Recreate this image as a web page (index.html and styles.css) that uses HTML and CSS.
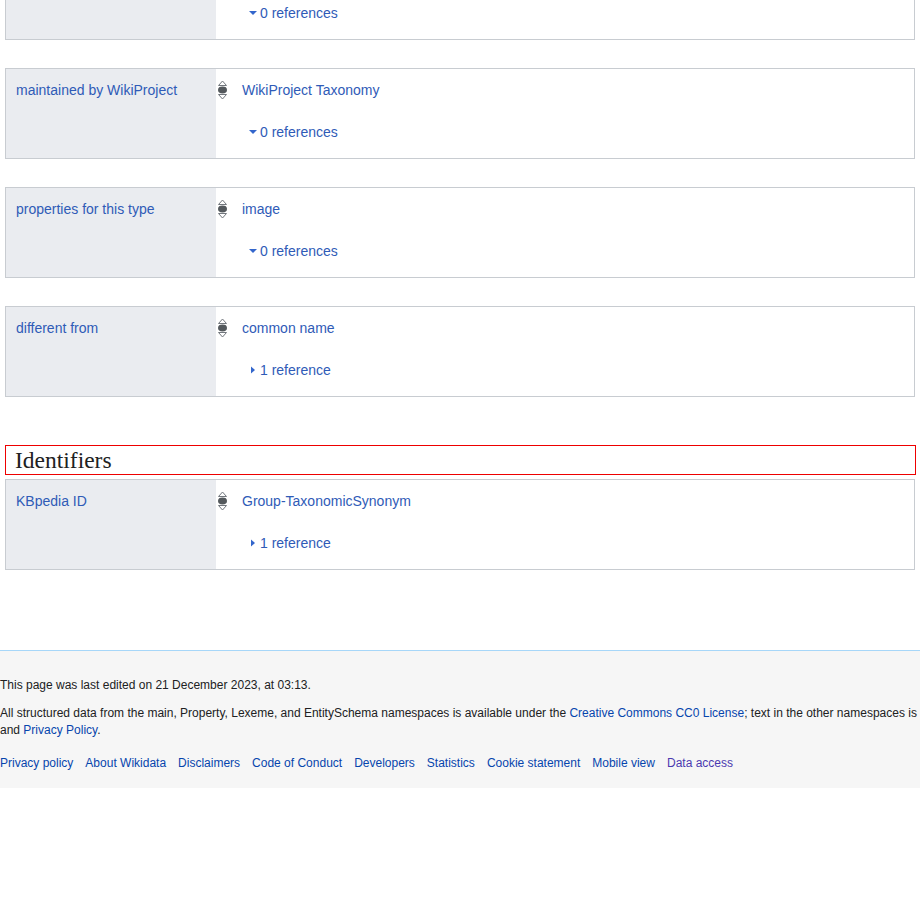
FILE: index.html
```html
<!DOCTYPE html>
<html lang="en">
<head>
<meta charset="utf-8">
<title>Wikidata</title>
<link rel="stylesheet" href="styles.css">
</head>
<body>
<main class="content">
  <section class="group">
    <div class="stmt">
      <div class="label"><a href="#">subclass of</a></div>
      <div class="values">
        <div class="value-row">
          <svg class="rank" width="11" height="20" viewBox="0 0 11 20"><path d="M5.5 1 L9.5 5.5 H1.5 Z" fill="none" stroke="#72777d" stroke-width="1"/><ellipse cx="5.5" cy="10" rx="4.5" ry="3.4" fill="#54595d"/><path d="M5.5 19 L9.5 14.5 H1.5 Z" fill="none" stroke="#72777d" stroke-width="1"/></svg>
          <a href="#" class="value">taxon</a>
        </div>
        <div class="refs"><svg class="tri" width="10" height="10" viewBox="0 0 10 10"><path d="M1 3 H9 L5 7 Z" fill="#36c"/></svg><a href="#">0 references</a></div>
      </div>
    </div>

    <div class="stmt">
      <div class="label"><a href="#">maintained by WikiProject</a></div>
      <div class="values">
        <div class="value-row">
          <svg class="rank" width="11" height="20" viewBox="0 0 11 20"><path d="M5.5 1 L9.5 5.5 H1.5 Z" fill="none" stroke="#72777d" stroke-width="1"/><ellipse cx="5.5" cy="10" rx="4.5" ry="3.4" fill="#54595d"/><path d="M5.5 19 L9.5 14.5 H1.5 Z" fill="none" stroke="#72777d" stroke-width="1"/></svg>
          <a href="#" class="value">WikiProject Taxonomy</a>
        </div>
        <div class="refs"><svg class="tri" width="10" height="10" viewBox="0 0 10 10"><path d="M1 3 H9 L5 7 Z" fill="#36c"/></svg><a href="#">0 references</a></div>
      </div>
    </div>

    <div class="stmt">
      <div class="label"><a href="#">properties for this type</a></div>
      <div class="values">
        <div class="value-row">
          <svg class="rank" width="11" height="20" viewBox="0 0 11 20"><path d="M5.5 1 L9.5 5.5 H1.5 Z" fill="none" stroke="#72777d" stroke-width="1"/><ellipse cx="5.5" cy="10" rx="4.5" ry="3.4" fill="#54595d"/><path d="M5.5 19 L9.5 14.5 H1.5 Z" fill="none" stroke="#72777d" stroke-width="1"/></svg>
          <a href="#" class="value">image</a>
        </div>
        <div class="refs"><svg class="tri" width="10" height="10" viewBox="0 0 10 10"><path d="M1 3 H9 L5 7 Z" fill="#36c"/></svg><a href="#">0 references</a></div>
      </div>
    </div>

    <div class="stmt">
      <div class="label"><a href="#">different from</a></div>
      <div class="values">
        <div class="value-row">
          <svg class="rank" width="11" height="20" viewBox="0 0 11 20"><path d="M5.5 1 L9.5 5.5 H1.5 Z" fill="none" stroke="#72777d" stroke-width="1"/><ellipse cx="5.5" cy="10" rx="4.5" ry="3.4" fill="#54595d"/><path d="M5.5 19 L9.5 14.5 H1.5 Z" fill="none" stroke="#72777d" stroke-width="1"/></svg>
          <a href="#" class="value">common name</a>
        </div>
        <div class="refs"><svg class="tri" width="10" height="10" viewBox="0 0 10 10"><path d="M3 1.5 V8.5 L7 5 Z" fill="#36c"/></svg><a href="#">1 reference</a></div>
      </div>
    </div>
  </section>

  <h2 class="section-heading">Identifiers</h2>

  <section class="group">
    <div class="stmt">
      <div class="label"><a href="#">KBpedia ID</a></div>
      <div class="values">
        <div class="value-row">
          <svg class="rank" width="11" height="20" viewBox="0 0 11 20"><path d="M5.5 1 L9.5 5.5 H1.5 Z" fill="none" stroke="#72777d" stroke-width="1"/><ellipse cx="5.5" cy="10" rx="4.5" ry="3.4" fill="#54595d"/><path d="M5.5 19 L9.5 14.5 H1.5 Z" fill="none" stroke="#72777d" stroke-width="1"/></svg>
          <a href="#" class="value">Group-TaxonomicSynonym</a>
        </div>
        <div class="refs"><svg class="tri" width="10" height="10" viewBox="0 0 10 10"><path d="M3 1.5 V8.5 L7 5 Z" fill="#36c"/></svg><a href="#">1 reference</a></div>
      </div>
    </div>
  </section>
</main>

<footer class="footer">
  <p class="edited">This page was last edited on 21 December 2023, at 03:13.</p>
  <p class="license"><span class="nowrap">All structured data from the main, Property, Lexeme, and EntitySchema namespaces is available under the <a href="#">Creative Commons CC0 License</a>; text in the other namespaces is</span><br>and <a href="#">Privacy Policy</a>.</p>
  <ul class="places">
    <li><a href="#">Privacy policy</a></li>
    <li><a href="#">About Wikidata</a></li>
    <li><a href="#">Disclaimers</a></li>
    <li><a href="#">Code of Conduct</a></li>
    <li><a href="#">Developers</a></li>
    <li><a href="#">Statistics</a></li>
    <li><a href="#">Cookie statement</a></li>
    <li><a href="#">Mobile view</a></li>
    <li><a href="#" class="visited">Data access</a></li>
  </ul>
</footer>
</body>
</html>
```

FILE: styles.css
```css
html, body {
  margin: 0;
  padding: 0;
  background: #fff;
  overflow: hidden;
}

body {
  font-family: "Liberation Sans", Arial, sans-serif;
  font-size: 14px;
  color: #202122;
  width: 920px;
}

a {
  color: #2f5bb7;
  text-decoration: none;
}

.content {
  margin: -51px 5px 0 5px;
}

.group {
  display: flex;
  flex-direction: column;
  gap: 28px;
}

.stmt {
  display: flex;
  border: 1px solid #c8ccd1;
  width: 908px;
}

.label {
  width: 200px;
  flex: 0 0 200px;
  background: #eaecf0;
  padding: 11px 0 0 10px;
  line-height: 20px;
}

.values {
  flex: 1;
  padding: 11px 0 16px 0;
  display: flex;
  flex-direction: column;
  gap: 22px;
}

.value-row {
  display: flex;
  align-items: center;
  height: 20px;
  line-height: 20px;
}

.rank {
  display: block;
  margin-left: 1px;
  margin-right: 14px;
}

.refs {
  display: flex;
  align-items: center;
  height: 20px;
  line-height: 20px;
  padding-left: 32px;
}

.tri {
  display: block;
  margin-right: 2px;
}

.section-heading {
  margin: 48px 0 4px 0;
  border: 1px solid #e00;
  width: 900px;
  padding: 0 0 0 9px;
  font-family: "Liberation Serif", Georgia, serif;
  font-weight: normal;
  font-size: 23.5px;
  line-height: 28px;
  height: 28px;
  color: #202122;
}

.footer {
  margin-top: 80px;
  border-top: 1px solid #a7d7f9;
  background: #f6f6f6;
  font-size: 12px;
  line-height: 16px;
  padding: 26px 0 17px 0;
}

.footer a {
  color: #0645ad;
}

.footer a.visited {
  color: #4b3ab0;
}

.footer p {
  margin: 0;
}

.edited {
  margin-bottom: 12px !important;
}

.license {
  line-height: 17px;
}

.nowrap {
  white-space: nowrap;
}

.places {
  list-style: none;
  margin: 16px 0 0 0;
  padding: 0;
  display: flex;
  gap: 12px;
}
```
